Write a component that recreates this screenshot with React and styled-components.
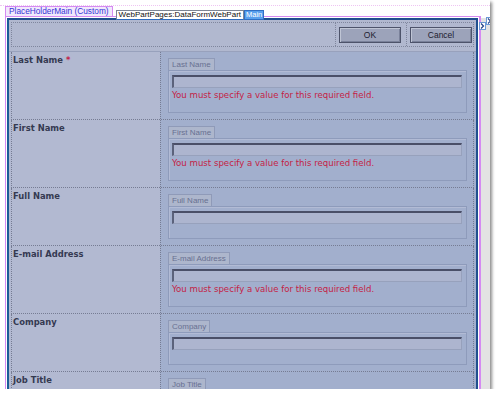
import React from 'react'
import styled, { createGlobalStyle } from 'styled-components'

const GlobalStyle = createGlobalStyle`
  html, body {
    margin: 0;
    padding: 0;
    background: #fff;
  }
  body {
    font-family: "Liberation Sans", Arial, sans-serif;
  }
`

const fields = [
  { label: 'Last Name', required: true, error: true },
  { label: 'First Name', error: true },
  { label: 'Full Name' },
  { label: 'E-mail Address', error: true },
  { label: 'Company' },
  { label: 'Job Title' },
]

export default function App() {
  return (
    <>
      <GlobalStyle />
      <Frame>
        <TagBar>
          <PlaceholderTag>PlaceHolderMain (Custom)</PlaceholderTag>
          <WebPartTag>WebPartPages:DataFormWebPart</WebPartTag>
          <MainTag>Main</MainTag>
        </TagBar>
        <Body>
          <Placeholder>
            <WebPart>
              <Toolbar>
                <ToolbarTable>
                  <Spacer />
                  <ButtonCell $pl={3} $pr={5}>
                    <Button>OK</Button>
                  </ButtonCell>
                  <ButtonCell $pl={3} $pr={1}>
                    <Button>Cancel</Button>
                  </ButtonCell>
                </ToolbarTable>
              </Toolbar>
              <FormArea>
                {fields.map(f => (
                  <Row key={f.label}>
                    <LabelCell>
                      {f.label}
                      {f.required && <Star> *</Star>}
                    </LabelCell>
                    <FieldCell>
                      <Legend>{f.label}</Legend>
                      <FieldBox $pb={f.error ? 11 : 14}>
                        <Input />
                        {f.error && <Error>You must specify a value for this required field.</Error>}
                      </FieldBox>
                    </FieldCell>
                  </Row>
                ))}
              </FormArea>
            </WebPart>
          </Placeholder>
          <SidePanel />
        </Body>
        <SmartTag $x={479} $y={22}>
          <Chevron />
        </SmartTag>
        <SmartTag $x={486} $y={17}>
          <Chevron />
        </SmartTag>
      </Frame>
    </>
  )
}

const Chevron = () => (
  <svg width="5" height="6" viewBox="0 0 5 6">
    <polyline points="1,0.5 3.5,3 1,5.5" fill="none" stroke="#1f3f86" strokeWidth="1.2" />
  </svg>
)

const Frame = styled.div`
  position: relative;
  width: 490px;
  height: 389px;
  box-sizing: border-box;
  padding-top: 5px;
  display: flex;
  flex-direction: column;
  background: #fff;
  overflow: hidden;
  box-shadow: 2px 2px 3px rgba(0, 0, 0, 0.45);
`

const TagBar = styled.div`
  height: 11px;
  box-sizing: border-box;
  border-top: 1px dotted #eec4f2;
  display: flex;
  align-items: flex-end;
  padding-left: 5px;
  gap: 3px;
  font-size: 8px;
  line-height: 9px;
`

const PlaceholderTag = styled.div`
  height: 10px;
  box-sizing: border-box;
  padding: 0 3px;
  background: #f2e8fc;
  border: 1px solid #d58af2;
  border-bottom: none;
  color: #3434d6;
  font-size: 8.3px;
  line-height: 9px;
  white-space: nowrap;
`

const WebPartTag = styled.div`
  position: relative;
  z-index: 2;
  height: 10px;
  margin-bottom: -4px;
  box-sizing: border-box;
  padding: 0 2px;
  background: #fff;
  border: 1px solid #7c8594;
  border-bottom-color: #2d6cc0;
  color: #111;
  font-size: 8px;
  line-height: 8px;
  white-space: nowrap;
`

const MainTag = styled.div`
  position: relative;
  z-index: 1;
  height: 10px;
  margin-left: -3px;
  margin-bottom: -4px;
  box-sizing: border-box;
  padding: 0 1px;
  background: #58a0ee;
  border: 1px solid #2f6fc4;
  color: #fff;
  font-size: 7.5px;
  line-height: 8px;
  white-space: nowrap;
`

const Body = styled.div`
  flex: 1;
  min-height: 0;
  display: flex;
`

const Placeholder = styled.div`
  width: 476px;
  margin-left: 5px;
  box-sizing: border-box;
  border: 1px solid #d58af2;
  border-right-width: 2px;
  border-bottom: none;
  padding: 1px 1px 0 1px;
  display: flex;
  background: #fff;
`

const WebPart = styled.div`
  flex: 1;
  min-width: 0;
  display: flex;
  flex-direction: column;
  overflow: hidden;
  border: 2px solid #1f4f8e;
  border-left-color: #1a5d96;
  border-bottom: none;
  background: #b2b9d1;
`

const SidePanel = styled.div`
  width: 9px;
  margin-top: 2px;
  background: #e3e3e3;
`

const Toolbar = styled.div`
  height: 32px;
  flex-shrink: 0;
  box-sizing: border-box;
  padding: 2px 2px 0 2px;
  border-bottom: 1px solid #98a1bc;
  background: #b1b8cf;
`

const ToolbarTable = styled.div`
  display: flex;
  height: 25px;
  box-sizing: border-box;
  border: 1px dotted #7f869d;
`

const Spacer = styled.div`
  flex: 1;
`

const ButtonCell = styled.div`
  border-left: 1px dotted #7f869d;
  padding: 4px ${p => p.$pr}px 0 ${p => p.$pl}px;
`

const Button = styled.div`
  width: 62px;
  height: 16px;
  box-sizing: border-box;
  display: flex;
  align-items: center;
  justify-content: center;
  background: #9ca3ba;
  border: 1px solid #4d536a;
  box-shadow: inset 1px 1px 0 #bfc5d5, inset -1px -1px 0 #7a819a;
  color: #1d2030;
  font-size: 8.5px;
`

const FormArea = styled.div`
  flex: 1;
  display: flex;
  flex-direction: column;
  padding: 0 2px;
  background: linear-gradient(90deg, #b2b9d1 151px, #a2afcd 151px);
`

const Row = styled.div`
  display: grid;
  grid-template-columns: 148px 1fr;
  flex-shrink: 0;
  border-left: 1px dotted #767c93;
  border-right: 1px dotted #767c93;
  border-bottom: 1px dotted #767c93;
`

const LabelCell = styled.div`
  padding: 3px 0 0 1px;
  background: #b2b9d1;
  color: #353a51;
  font-family: "DejaVu Sans", Verdana, sans-serif;
  font-weight: bold;
  font-size: 8.4px;
  line-height: 10px;
`

const Star = styled.span`
  color: #c41e45;
`

const FieldCell = styled.div`
  display: flex;
  flex-direction: column;
  align-items: flex-start;
  padding: 6px 6px 6px 7px;
  border-left: 1px dotted #767c93;
  background: #a2afcd;
`

const Legend = styled.div`
  height: 12px;
  box-sizing: border-box;
  padding: 0 3px;
  background: #adb6cc;
  border: 1px solid #8f9ab8;
  border-bottom: none;
  color: #687091;
  font-size: 8px;
  line-height: 11px;
`

const FieldBox = styled.div`
  align-self: stretch;
  border: 1px solid #8e9bbb;
  box-shadow: inset 1px 1px 0 #b2bbd5;
  padding: 4px 4px ${p => p.$pb}px 3px;
`

const Input = styled.div`
  height: 13px;
  box-sizing: border-box;
  background: #adb5cf;
  border-top: 2px solid #4a4f68;
  border-left: 2px solid #5b627b;
  border-right: 1px solid #97a1bc;
  border-bottom: 1px solid #97a1bc;
`

const Error = styled.div`
  margin-top: 2px;
  color: #c41e45;
  font-family: "DejaVu Sans", Verdana, sans-serif;
  font-size: 8.6px;
  line-height: 11px;
  white-space: nowrap;
`

const SmartTag = styled.div`
  position: absolute;
  left: ${p => p.$x}px;
  top: ${p => p.$y}px;
  width: 7px;
  height: 8px;
  box-sizing: border-box;
  display: flex;
  align-items: center;
  justify-content: center;
  background: #fff;
  border: 1px solid #6b9ad6;
`
